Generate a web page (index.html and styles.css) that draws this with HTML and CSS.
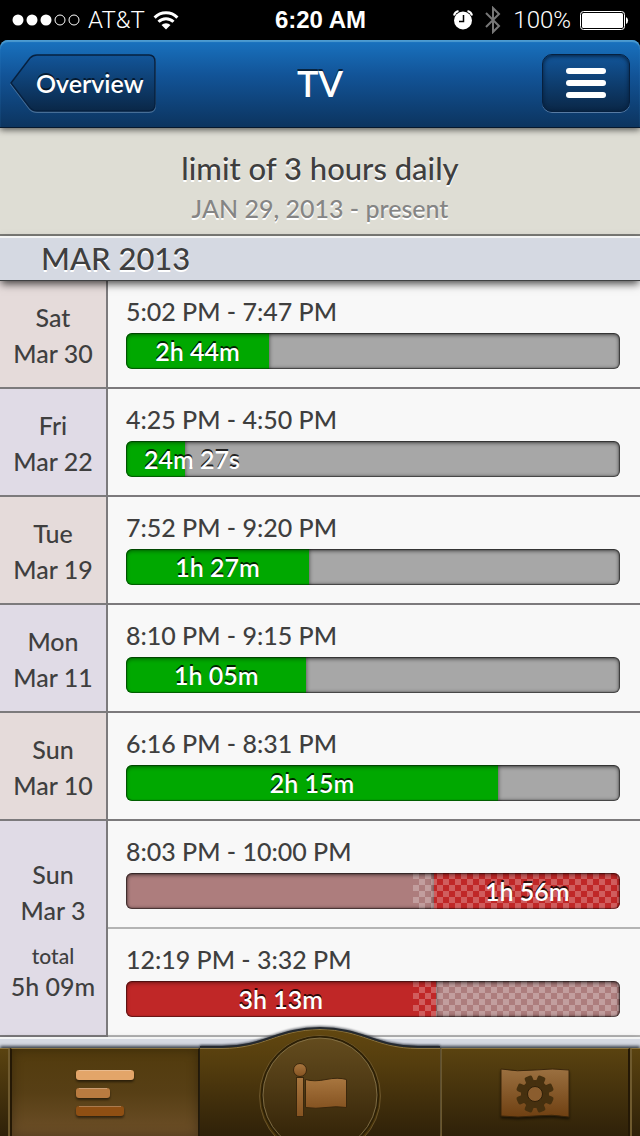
FILE: index.html
```html
<!DOCTYPE html>
<html lang="en">
<head>
    <meta charset="UTF-8">
    <meta name="viewport" content="width=device-width, initial-scale=1.0">
    <title>TV</title>
    <link rel="stylesheet" href="styles.css">
</head>
<body>
    <!-- Status bar -->
    <div class="status-bar">
        <div class="status-left">
            <svg class="signal" width="68" height="14" viewBox="0 0 68 14">
                <g fill="#fff"><circle cx="6" cy="7" r="5.5"/><circle cx="20" cy="7" r="5.5"/><circle cx="34" cy="7" r="5.5"/></g>
                <g fill="none" stroke="#fff"><circle cx="48" cy="7" r="5"/><circle cx="62" cy="7" r="5"/></g>
            </svg>
            <span class="carrier">AT&amp;T</span>
            <svg width="26" height="20" viewBox="0 0 26 20">
                <g fill="none" stroke="#fff" stroke-width="3">
                    <path d="M1.6 7.6a16 16 0 0 1 22.8 0"/>
                    <path d="M5.5 11.8a10.5 10.5 0 0 1 15 0"/>
                </g>
                <path fill="#fff" d="M8.5 15a6.4 6.4 0 0 1 9 0L13 19.5z"/>
            </svg>
        </div>
        <div class="clock">6:20 AM</div>
        <div class="status-right">
            <svg width="20" height="20" viewBox="0 0 20 20">
                <circle cx="10" cy="10.500" r="9" fill="#fff"/>
                <path d="M1 5.500A6 6 0 0 1 5.500 1M19 5.500A6 6 0 0 0 14.500 1" fill="none" stroke="#fff" stroke-width="2"/>
                <path d="M10.500 5v6.500H6" fill="none" stroke="#000" stroke-width="1.500"/>
            </svg>
            <svg class="bluetooth" width="16" height="28" viewBox="0 0 16 28">
                <path d="M1 7l13 13-6 6V2l6 6L1 21" fill="none" stroke="#777" stroke-width="2"/>
            </svg>
            <span class="percent">100%</span>
            <svg width="50" height="20" viewBox="0 0 50 20">
                <rect x="1.500" y="1.500" width="44" height="18" rx="3" fill="none" stroke="#fff"/>
                <rect x="3" y="3" width="41" height="15" rx="1.500" fill="#fff"/>
                <path d="M47 7a4 4 0 0 1 0 7z" fill="#fff"/>
            </svg>
        </div>
    </div>

    <!-- Title bar -->
    <header class="nav-bar">
        <a class="back-button" href="#overview">
            <svg class="back-shape" width="148" height="62" viewBox="0 0 148 62">
                <defs>
                    <linearGradient id="backFill" x1="0" y1="0" x2="0" y2="1">
                        <stop offset="0" stop-color="#125599"/>
                        <stop offset="1" stop-color="#0a2747"/>
                    </linearGradient>
                </defs>
                <path d="M1 31L20 6Q23 3 27 3H139Q145 3 145 10V52Q145 59 139 59H27Q23 59 20 56Z" fill="none" stroke="#6d8fb3" stroke-opacity=".6" stroke-width="2" transform="translate(0 1)"/>
                <path d="M1 31L20 6Q23 3 27 3H139Q145 3 145 10V52Q145 59 139 59H27Q23 59 20 56Z" fill="url(#backFill)" stroke="#06203f" stroke-width="1.500"/>
            </svg>
            <span class="back-text">Overview</span>
        </a>
        <h1>TV</h1>
        <button class="menu-button" type="button" aria-label="Menu">
            <span></span>
            <span></span>
            <span></span>
        </button>
    </header>

    <!-- Time log -->
    <main>
        <section class="goal">
            <h2>limit of 3 hours daily</h2>
            <p>JAN 29, 2013 - present</p>
        </section>

        <h3 class="month">MAR 2013</h3>
        <table class="log">
            <tbody>
                <tr>
                    <th class="pink" scope="row">Sat<br>Mar 30</th>
                    <td>
                        <div class="time">5:02 PM - 7:47 PM</div>
                        <div class="bar"><div class="fill green" style="width: 29%"><span>2h 44m</span></div><div class="rest"></div></div>
                    </td>
                </tr>
                <tr>
                    <th scope="row">Fri<br>Mar 22</th>
                    <td>
                        <div class="time">4:25 PM - 4:50 PM</div>
                        <div class="bar"><div class="fill green short" style="width: 12%"><span>24m 27s</span></div><div class="rest"></div></div>
                    </td>
                </tr>
                <tr>
                    <th class="pink" scope="row">Tue<br>Mar 19</th>
                    <td>
                        <div class="time">7:52 PM - 9:20 PM</div>
                        <div class="bar"><div class="fill green" style="width: 37%"><span>1h 27m</span></div><div class="rest"></div></div>
                    </td>
                </tr>
                <tr>
                    <th scope="row">Mon<br>Mar 11</th>
                    <td>
                        <div class="time">8:10 PM - 9:15 PM</div>
                        <div class="bar"><div class="fill green" style="width: 36.5%"><span>1h 05m</span></div><div class="rest"></div></div>
                    </td>
                </tr>
                <tr>
                    <th class="pink" scope="row">Sun<br>Mar 10</th>
                    <td>
                        <div class="time">6:16 PM - 8:31 PM</div>
                        <div class="bar"><div class="fill green" style="width: 75.3%"><span>2h 15m</span></div><div class="rest"></div></div>
                    </td>
                </tr>
                <tr class="same-day">
                    <th rowspan="2" scope="rowgroup">Sun<br>Mar 3<div class="total"><small>total</small>5h 09m</div></th>
                    <td>
                        <div class="time">8:03 PM - 10:00 PM</div>
                        <div class="bar over"><div class="rest"></div><div class="fill red" style="width: 37.6%"><span>1h 56m</span></div><div class="checker" style="width: 42%"></div></div>
                    </td>
                </tr>
                <tr class="same-day">
                    <td>
                        <div class="time">12:19 PM - 3:32 PM</div>
                        <div class="bar over"><div class="fill red" style="width: 62.7%"><span>3h 13m</span></div><div class="rest"></div><div class="checker" style="width: 42%"></div></div>
                    </td>
                </tr>
            </tbody>
        </table>
        <div class="month"></div>
    </main>

    <!-- Tabs -->
    <nav class="tab-bar">
        <div class="edge"></div>
        <a class="tab active" href="#log" aria-label="Log">
            <svg width="62" height="50" viewBox="0 0 62 50">
                <rect x="2" y="2" width="58" height="10" rx="3" fill="#e3a569"/>
                <rect x="2" y="20" width="34" height="10" rx="3" fill="#b97b40"/>
                <rect x="2" y="38" width="48" height="10" rx="3" fill="#8f4f13"/>
                <path d="M5 2.500h52M5 20.500h28M5 38.500h42" stroke="#fff" stroke-opacity=".25"/>
            </svg>
        </a>
        <a class="tab middle" href="#goal" aria-label="Goal">
            <svg class="hump" width="240" height="110" viewBox="0 0 240 110">
                <defs>
                    <linearGradient id="wood" gradientUnits="userSpaceOnUse" x1="0" y1="0" x2="0" y2="110">
                        <stop offset="0" stop-color="#634810"/>
                        <stop offset=".35" stop-color="#543d0e"/>
                        <stop offset="1" stop-color="#2f2109"/>
                    </linearGradient>
                    <linearGradient id="disc" x1="0" y1="0" x2="0" y2="1">
                        <stop offset="0" stop-color="#644c1e"/>
                        <stop offset=".4" stop-color="#503b15"/>
                        <stop offset=".85" stop-color="#352509"/>
                    </linearGradient>
                    <linearGradient id="cloth" x1="0" y1="0" x2="0" y2="1">
                        <stop offset="0" stop-color="#a8763f"/>
                        <stop offset="1" stop-color="#855321"/>
                    </linearGradient>
                </defs>
                <path d="M0 21H22C64 21 78 2 120 2S176 21 218 21H240V110H0Z" fill="url(#wood)"/>
                <path d="M0 22.500H22C64 22.500 78 3.500 120 3.500S176 22.500 218 22.500H240" fill="none" stroke="#8b7440" stroke-width="1"/>
                <path d="M0 21H22C64 21 78 2 120 2S176 21 218 21H240" fill="none" stroke="#252a30" stroke-width="2"/>
                <circle cx="120" cy="70" r="60.500" fill="#493409" stroke="#796338" stroke-opacity=".7"/>
                <circle cx="120" cy="69" r="58" fill="url(#disc)" stroke="#2d2006" stroke-width="2"/>
                <circle cx="120" cy="69" r="57" fill="none" stroke="#8d7a50" stroke-opacity=".8"/>
                <g fill="url(#cloth)" stroke="#3a270c">
                    <circle cx="100" cy="44" r="6.500"/>
                    <rect x="96.500" y="51.500" width="7" height="39"/>
                    <path d="M105.500 53.500Q114 56 126 53.500T146.500 53.500V81.500Q136 80 126 81.500T105.500 81.500Z"/>
                </g>
            </svg>
        </a>
        <a class="tab last" href="#settings" aria-label="Settings">
            <svg width="70" height="50" viewBox="0 0 70 50">
                <defs>
                    <linearGradient id="patch" x1="0" y1="0" x2="0" y2="1">
                        <stop offset="0" stop-color="#9b7040"/>
                        <stop offset="1" stop-color="#6f4012"/>
                    </linearGradient>
                </defs>
                <path d="M1 1Q17 4 35 2T69 2V49Q52 46 35 48T1 48Z" fill="url(#patch)" stroke="#3a260b"/>
                <g fill="#46300f" transform="translate(35 26)">
                    <circle r="14"/>
                    <rect x="-4" y="-19" width="8" height="38" rx="2" transform="rotate(22.500)"/>
                    <rect x="-4" y="-19" width="8" height="38" rx="2" transform="rotate(67.500)"/>
                    <rect x="-4" y="-19" width="8" height="38" rx="2" transform="rotate(112.500)"/>
                    <rect x="-4" y="-19" width="8" height="38" rx="2" transform="rotate(157.500)"/>
                    <circle r="7.500" fill="#8b5d2e" stroke="#2f1f08"/>
                </g>
            </svg>
        </a>
        <div class="edge right"></div>
    </nav>
</body>
</html>
```
FILE: styles.css
```css
* {
    box-sizing: border-box;
}

body {
    margin: 0;
    height: 100vh;
    display: flex;
    flex-direction: column;
    overflow: hidden;
    background: #000;
    color: #3f3f3f;
    font-family: Futura, Lato, sans-serif;
    font-weight: 500;
}

h1, h2, h3, p {
    margin: 0;
    font-weight: 500;
}

a {
    color: inherit;
    text-decoration: none;
}

svg {
    display: block;
}

/* Status bar */
.status-bar {
    display: grid;
    grid-template-columns: 1fr auto 1fr;
    align-items: center;
    height: 40px;
    flex-shrink: 0;
    padding: 0 11px 0 12px;
    color: #fff;
    font-family: Roboto, sans-serif;
    font-size: 24px;
}

.status-left, .status-right {
    display: flex;
    align-items: center;
    gap: 8px;
}

.status-right {
    justify-content: flex-end;
}

.carrier, .percent {
    font-weight: 300;
}

.bluetooth {
    margin: 0 4px;
}

.clock {
    font-family: "Liberation Sans", sans-serif;
    font-weight: 700;
}

/* Title bar */
.nav-bar {
    display: grid;
    grid-template-columns: 1fr auto 1fr;
    align-items: center;
    height: 88px;
    flex-shrink: 0;
    padding: 0 10px 2px;
    position: relative;
    z-index: 3;
    border-radius: 8px 8px 0 0;
    border-bottom: 1px solid #06182e;
    background: linear-gradient(#1973c0, #125498 40%, #0c345f);
    box-shadow: inset 0 2px 1px #4c9bd0, 0 2px 6px rgba(0, 0, 0, 0.6);
    color: #fff;
    text-shadow: 0 -2px 0 rgba(0, 0, 0, 0.6);
}

.nav-bar h1 {
    font-size: 36px;
    font-weight: 600;
    line-height: 44px;
}

.back-button {
    position: relative;
    width: 148px;
    height: 62px;
    display: flex;
    align-items: center;
    padding-left: 26px;
    font-size: 25px;
    font-weight: 600;
}

.back-shape {
    position: absolute;
    left: 0;
    top: 0;
}

.back-text {
    position: relative;
}

.menu-button {
    justify-self: end;
    display: flex;
    flex-direction: column;
    align-items: center;
    justify-content: center;
    gap: 6px;
    width: 88px;
    height: 58px;
    padding: 0;
    border: 1px solid #06203f;
    border-radius: 10px;
    background: linear-gradient(#125599, #0a2747);
    box-shadow: inset 0 1px 4px #051c38, 0 1px 0 rgba(120, 150, 185, 0.7);
    cursor: pointer;
}

.menu-button span {
    width: 40px;
    height: 6px;
    border-radius: 3px;
    background: #fff;
}

/* Goal and month headings */
main {
    flex: 1;
    min-height: 0;
    overflow: hidden;
    background: #f8f8f8;
}

.goal {
    height: 108px;
    padding-top: 20px;
    border-bottom: 2px solid #7b7b77;
    background: #deddd4;
    text-align: center;
    text-shadow: 0 2px 0 #fff;
}

.goal h2 {
    font-size: 31px;
    line-height: 40px;
}

.goal p {
    color: #858585;
    font-size: 25px;
    line-height: 40px;
}

.month {
    position: relative;
    z-index: 1;
    height: 45px;
    padding-left: 41px;
    border-top: 2px solid #f3f4f4;
    border-bottom: 1px solid #3f4142;
    background: #d5d9e2;
    box-shadow: 0 4px 8px -1px rgba(0, 0, 0, 0.7);
    font-size: 31px;
    line-height: 40px;
    text-shadow: 0 2px 0 #fff;
}

/* Log table */
.log {
    width: 100%;
    border-spacing: 0;
    font-size: 25px;
    line-height: 36px;
}

.log th {
    width: 108px;
    padding: 2px 0 0;
    border-right: 2px solid #7c7a7c;
    border-bottom: 2px solid #7c7a7c;
    background: #e0dbe6;
    font-weight: 500;
}

.log .pink {
    background: #e5dbda;
}

.log td {
    height: 108px;
    padding: 2px 20px 8px 18px;
    border-bottom: 2px solid #7c7a7c;
    background: #f8f8f8;
}

.log .same-day td {
    border-bottom-color: #b4b4b4;
}

.total {
    padding-top: 14px;
    line-height: 32px;
}

.total small {
    display: block;
    font-size: 21px;
    line-height: 28px;
}

.time {
    margin-bottom: 4px;
}

.bar {
    position: relative;
    display: flex;
    height: 36px;
    border-radius: 6px;
    overflow: hidden;
    background: #a7a7a7;
}

/* inner shadow drawn over the segments */
.bar::after {
    content: "";
    position: absolute;
    inset: 0;
    z-index: 2;
    border-radius: 6px;
    box-shadow: inset 0 0 1px 1px rgba(0, 0, 0, 0.45), inset 0 2px 4px rgba(0, 0, 0, 0.4);
}

.fill {
    flex-shrink: 0;
    color: #fff;
    text-align: center;
    text-shadow: 0 -2px 0 rgba(0, 0, 0, 0.8);
    white-space: nowrap;
    font-weight: 600;
}

.fill span {
    position: relative;
    z-index: 3;
}

.short {
    padding-left: 18px;
    text-align: left;
}

.green {
    background: #00a800;
}

.red {
    background: #c02727;
}

.rest {
    flex: 1;
    box-shadow: inset 0 0 4px rgba(0, 0, 0, 0.6);
}

.over .rest {
    background: #ad7d7d;
}

.checker {
    position: absolute;
    top: 0;
    right: 0;
    bottom: 0;
    z-index: 1;
    background: repeating-conic-gradient(transparent 0 25%, rgba(255, 255, 255, 0.25) 0 50%) 0 0 / 12px 12px;
}

/* Tabs */
.tab-bar {
    display: grid;
    grid-template-columns: 10px 1fr 240px 1fr 10px;
    grid-template-rows: 88px;
    flex-shrink: 0;
    position: relative;
    z-index: 2;
    background: linear-gradient(#5b4310, #2f2109);
    box-shadow: 0 -2px 3px #3a414b;
}

.tab {
    display: flex;
    align-items: center;
    justify-content: center;
    border-top: 1px solid #8b7440;
}

.tab svg {
    filter: drop-shadow(0 2px 1px rgba(0, 0, 0, 0.5));
}

.edge {
    border-top: 1px solid #8b7440;
    border-right: 2px solid #6f5a2e;
}

.edge.right {
    border-right: none;
    border-left: 2px solid #6f5a2e;
}

.active {
    border-left: 2px solid #241805;
    border-right: 2px solid #241805;
    background: linear-gradient(#523b0d, #573f15 50%, #6d4f28);
    box-shadow: inset 0 0 12px rgba(0, 0, 0, 0.3);
}

.middle {
    align-items: flex-end;
    border-top: none;
    border-left: 2px solid #6f5a2e;
    border-right: 2px solid #241805;
}

.middle .hump {
    flex-shrink: 0;
    filter: drop-shadow(0 -1px 1px rgba(40, 46, 56, 0.7));
}

.last {
    border-left: 2px solid #6f5a2e;
    border-right: 2px solid #241805;
}
```
